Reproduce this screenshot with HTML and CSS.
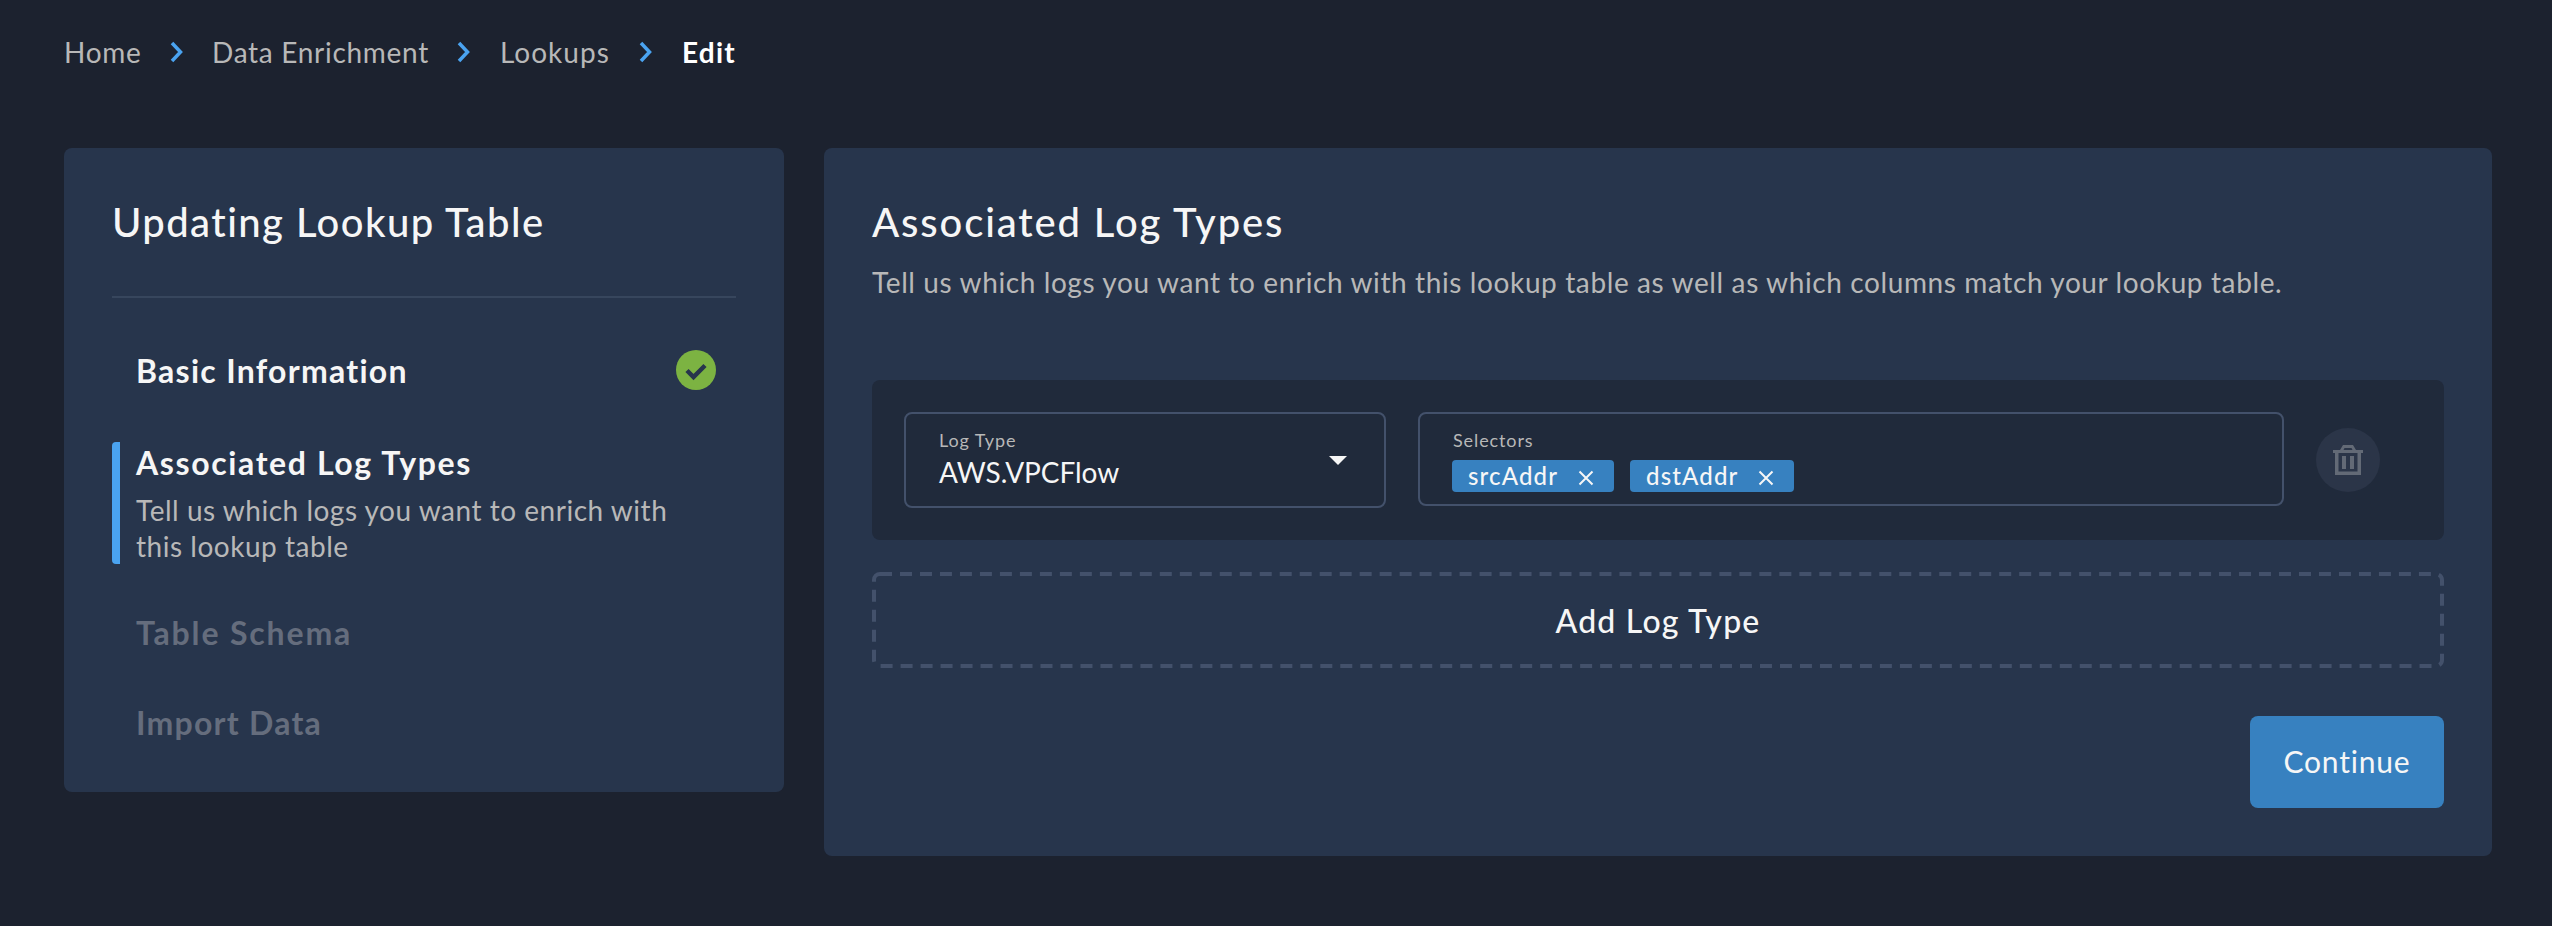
FILE: index.html
```
<!DOCTYPE html>
<html lang="en">
<head>
<meta charset="utf-8">
<title>Edit Lookup Table</title>
<link rel="stylesheet" href="styles.css">
</head>
<body>
<nav class="breadcrumb">
  <a class="crumb crumb-home">Home</a>
  <svg class="chevron" viewBox="0 0 13 20"><path d="M2 1 L10.500 10 L2 19"/></svg>
  <a class="crumb crumb-data">Data Enrichment</a>
  <svg class="chevron" viewBox="0 0 13 20"><path d="M2 1 L10.500 10 L2 19"/></svg>
  <a class="crumb crumb-lookups">Lookups</a>
  <svg class="chevron" viewBox="0 0 13 20"><path d="M2 1 L10.500 10 L2 19"/></svg>
  <span class="crumb crumb-current">Edit</span>
</nav>
<main class="layout">
  <aside class="card steps">
    <h2 class="title title-side">Updating Lookup Table</h2>
    <div class="divider"></div>
    <div class="step step-done">
      <span class="step-name name-basic">Basic Information</span>
      <svg class="check" viewBox="0 0 40 40"><circle cx="20" cy="20" r="20"/><path d="M11 20.500 L17.500 27 L29 15.500"/></svg>
    </div>
    <div class="step step-active">
      <span class="step-name name-logs">Associated Log Types</span>
      <p class="step-text">Tell us which logs you want to enrich with<br>this lookup table</p>
    </div>
    <div class="step step-schema"><span class="step-name name-schema">Table Schema</span></div>
    <div class="step step-import"><span class="step-name name-import">Import Data</span></div>
  </aside>
  <section class="card content">
    <h2 class="title title-main">Associated Log Types</h2>
    <p class="subtitle">Tell us which logs you want to enrich with this lookup table as well as which columns match your lookup table.</p>
    <div class="row">
      <div class="field field-type">
        <div>
          <div class="label label-type">Log Type</div>
          <div class="value">AWS.VPCFlow</div>
        </div>
        <svg class="caret" viewBox="0 0 18 9"><path d="M0 0 H18 L9 9 Z"/></svg>
      </div>
      <div class="field field-selectors">
        <div>
          <div class="label label-selectors">Selectors</div>
          <div class="chips">
            <span class="chip chip-src"><span>srcAddr</span><svg class="cross" viewBox="0 0 14 14"><path d="M0.500 0.500 L13.500 13.500 M13.500 0.500 L0.500 13.500"/></svg></span>
            <span class="chip chip-dst"><span>dstAddr</span><svg class="cross" viewBox="0 0 14 14"><path d="M0.500 0.500 L13.500 13.500 M13.500 0.500 L0.500 13.500"/></svg></span>
          </div>
        </div>
      </div>
      <button class="remove" aria-label="Remove">
        <svg class="trash" viewBox="0 0 30 30"><path fill-rule="evenodd" d="M10 0 H20 L23 5 H30 V8 H28 V30 H2 V8 H0 V5 H7 Z M11.500 3 L10.500 5 H19.500 L18.500 3 Z M5.500 8 V26.500 H24.500 V8 Z M9 11 H13 V24 H9 Z M17 11 H21 V24 H17 Z"/></svg>
      </button>
    </div>
    <button class="add">
      <svg class="dashes" viewBox="0 0 1572 96"><rect x="2" y="2" width="1568" height="92" rx="6"/></svg>
      <span>Add Log Type</span>
    </button>
    <button class="continue">Continue</button>
  </section>
</main>
</body>
</html>
```
FILE: styles.css
```
* { box-sizing: border-box; }
body {
  margin: 0;
  min-height: 926px;
  background: #1c222f;
  color: #f6f6f6;
  font-family: Lato, "Open Sans", sans-serif;
}
h2, p { margin: 0; }
button { border: 0; padding: 0; font-family: inherit; color: inherit; }
svg { display: block; flex: none; overflow: visible; }
.breadcrumb {
  display: flex;
  align-items: center;
  padding: 34px 64px 0;
  height: 70px;
  font-size: 28px;
  line-height: 36px;
  letter-spacing: 0.7px;
  color: #b8b8b8;
}
.crumb { flex: none; white-space: nowrap; }
.crumb-home { width: 106px; }
.crumb-data { width: 245px; }
.crumb-lookups { width: 140px; padding-left: 1px; letter-spacing: 1px; }
.crumb-current { padding-left: 1px; font-weight: 700; color: #fff; letter-spacing: 1.200px; }
.chevron { width: 13px; height: 20px; margin: 0 29px 0 0; fill: none; stroke: #4aa3f0; stroke-width: 3.500; }
.layout { display: flex; align-items: flex-start; gap: 40px; padding: 78px 60px 0 64px; }
.card { background: #27354c; border-radius: 8px; }
.steps { width: 720px; padding: 50px 48px 49px; }
.content { flex: 1; padding: 50px 48px 48px; }
.title { font-size: 40px; line-height: 48px; font-weight: 500; white-space: nowrap; }
.title-side { letter-spacing: 1.420px; }
.title-main { letter-spacing: 1.850px; }
.divider { height: 2px; margin-top: 50px; background: #37465d; }
.step { padding-left: 24px; }
.step-name { display: block; padding-top: 1px; font-size: 32px; line-height: 40px; font-weight: 700; white-space: nowrap; }
.name-basic { letter-spacing: 1.280px; }
.name-logs { letter-spacing: 1.620px; }
.name-schema { letter-spacing: 1.850px; }
.name-import { letter-spacing: 1.250px; }
.step-done { display: flex; justify-content: space-between; height: 40px; margin-top: 52px; padding-right: 20px; }
.check { width: 40px; height: 40px; }
.check circle { fill: #7cb342; }
.check path { fill: none; stroke: #27354c; stroke-width: 4.500; }
.step-active {
  height: 122px;
  margin-top: 52px;
  background: linear-gradient(#4aa3f0, #4aa3f0) left / 8px 100% no-repeat;
  border-radius: 4px;
}
.step-text { margin-top: 9px; font-size: 28px; line-height: 36px; letter-spacing: 0.520px; color: #b8b8b8; white-space: nowrap; }
.step-schema, .step-import { color: #656d7d; }
.step-schema { margin-top: 48px; }
.step-import { margin-top: 49px; }
.subtitle { margin-top: 18px; font-size: 28px; line-height: 36px; letter-spacing: 0.615px; color: #b8b8b8; white-space: nowrap; }
.row { display: flex; gap: 32px; height: 160px; margin-top: 80px; padding: 32px; background: #202a3b; border-radius: 8px; }
.field { border: 2px solid #43516b; border-radius: 8px; padding: 14px 32px 0; white-space: nowrap; }
.field-type { display: flex; justify-content: space-between; width: 482px; height: 96px; padding: 14px 37px 0 32px; }
.field-selectors { width: 866px; height: 94px; }
.label { padding-left: 1px; font-size: 18px; line-height: 24px; letter-spacing: 0.900px; color: #b8b8b8; }
.value { margin-top: 2px; font-size: 28px; line-height: 36px; padding-left: 1px; letter-spacing: -0.050px; }
.caret { width: 18px; height: 9px; margin-top: 28px; fill: #f6f6f6; }
.chips { display: flex; gap: 16px; margin-top: 8px; }
.chip { display: flex; justify-content: space-between; height: 32px; padding: 0 21px 0 16px; background: #3781c0; border-radius: 4px; font-size: 24px; line-height: 31px; font-weight: 500; letter-spacing: 1.150px; }
.chip-src { width: 162px; }
.chip-dst { width: 164px; }
.cross { width: 14px; height: 14px; margin-top: 11px; fill: none; stroke: #f6f6f6; stroke-width: 2; }
.remove { display: grid; place-items: center; width: 64px; height: 64px; margin-top: 16px; border-radius: 50%; background: #2b3548; }
.trash { width: 30px; height: 30px; fill: #636a76; }
.add { position: relative; display: grid; place-items: center; width: 100%; height: 96px; margin-top: 32px; padding-top: 2px; background: none; font-size: 32px; line-height: 40px; font-weight: 500; letter-spacing: 1.200px; }
.dashes { position: absolute; inset: 0; width: 100%; height: 100%; fill: none; stroke: #43516b; stroke-width: 4; stroke-dasharray: 12 7.986; }
.continue { display: block; width: 194px; height: 92px; margin: 48px 0 0 auto; padding-bottom: 2px; border-radius: 8px; background: #3781c0; font-size: 30px; line-height: 36px; letter-spacing: 0.800px; }
```
